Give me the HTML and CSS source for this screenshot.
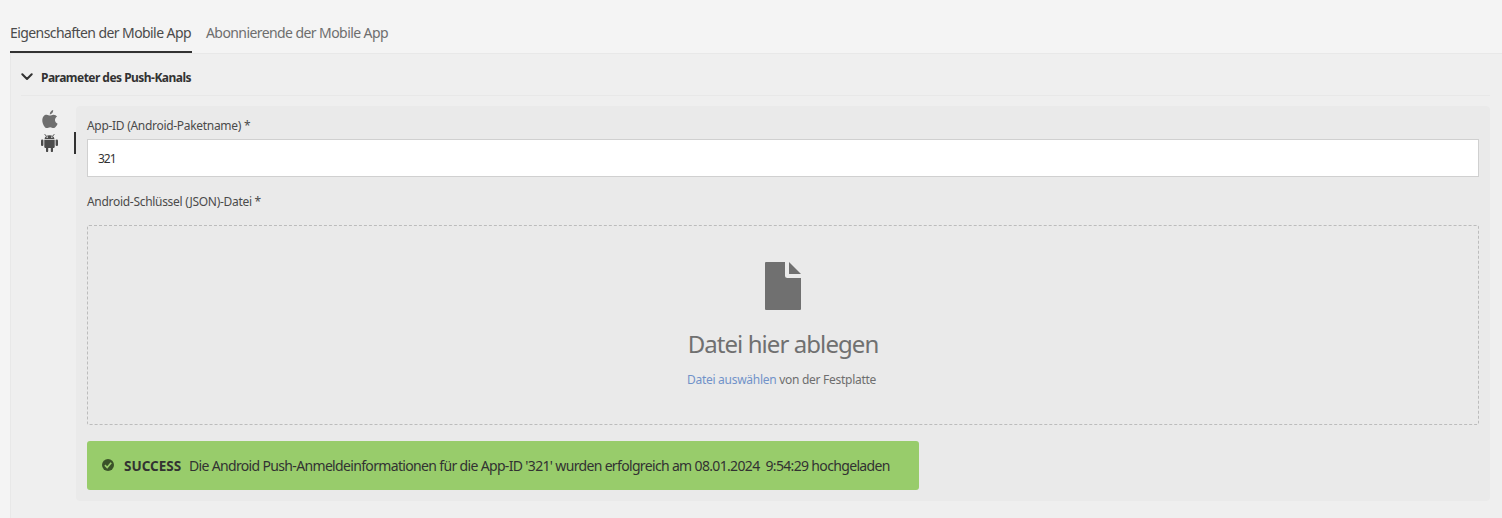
FILE: index.html
```html
<!DOCTYPE html>
<html lang="de">
<head>
<meta charset="utf-8">
<title>Mobile App</title>
<link rel="stylesheet" href="styles.css">
</head>
<body>
<nav class="tabs">
  <a class="tab tab-active"><span>Eigenschaften der Mobile App</span></a>
  <a class="tab"><span>Abonnierende der Mobile App</span></a>
</nav>
<main class="panel">
  <header class="section-head">
    <svg class="chevron" viewBox="0 0 12 8"><path d="M1.3 1.2 6 6 10.7 1.2" fill="none" stroke="#323232" stroke-width="2" stroke-linecap="round" stroke-linejoin="round"/></svg>
    <h1><span>Parameter des Push-Kanals</span></h1>
  </header>
  <div class="channel">
    <div class="platforms">
      <div class="platform">
        <svg class="icon apple" viewBox="0 0 16 18"><path d="M11.2 0C11.4 2.5 9.7 4.3 7.8 4.5 7.6 2.4 9.2.5 11.2 0Z"/><path d="M8 5.6C9 5.6 9.9 4.7 11.5 4.7c1.5 0 2.8.8 3.6 1.9-3 1.8-2.7 5.8.5 7.1C14.9 15.6 13.3 18 11.6 18c-1.300 0-1.900-.8-3.400-.8S6 18 4.800 18C2.700 18 .3 13.700.3 10.400.3 6.700 2.400 4.700 4.600 4.700 6 4.700 7 5.600 8 5.600Z"/></svg>
      </div>
      <div class="platform platform-active">
        <svg class="icon android" viewBox="0 0 17 18"><path d="M3.700.2 5.400 2.200M13.300.2 11.600 2.200" fill="none" stroke="#4b4b4b" stroke-width="1"/><path fill-rule="evenodd" d="M3.600 5C3.600 2.700 5.800 1.300 8.500 1.300S13.400 2.700 13.400 5ZM5.500 2.600v1.200h1.400v-1.200ZM10.100 2.600v1.200h1.400v-1.200Z"/><path d="M3.300 5.800h10.400v7.300a.8.8 0 0 1-.8.800H12V17.100a.9.900 0 0 1-2.200 0V13.900H7.200V17.100a.9.900 0 0 1-2.200 0V13.900H4.100a.8.800 0 0 1-.8-.800Z"/><rect x="0" y="5.400" width="2.400" height="6.600" rx="1.100"/><rect x="14.600" y="5.400" width="2.400" height="6.600" rx="1.100"/></svg>
      </div>
    </div>
    <section class="form">
      <label class="label" for="app-id"><span>App-ID (Android-Paketname) *</span></label>
      <input class="field" id="app-id" value="321">
      <div class="label label-file"><span>Android-Schlüssel (JSON)-Datei *</span></div>
      <div class="drop">
        <svg class="file" viewBox="0 0 36 48"><path d="M1 0H20V13.500Q20 16 22.500 16H36V47Q36 48 35 48H1Q0 48 0 47V1Q0 0 1 0Z"/><path d="M24 0V12H36Z"/></svg>
        <div class="drop-title"><span>Datei hier ablegen</span></div>
        <div class="drop-sub"><span><a>Datei auswählen</a> von der Festplatte</span></div>
      </div>
      <div class="alert">
        <svg class="check" viewBox="0 0 12 12"><circle cx="6" cy="6" r="6" fill="#3a5229"/><path d="M2.900 6.100 5.200 8.500 9.200 3.800" fill="none" stroke="#98cc6b" stroke-width="1.700"/></svg>
        <strong>SUCCESS</strong>
        <span class="msg">Die Android Push-Anmeldeinformationen für die App-ID '321' wurden erfolgreich am 08.01.2024&nbsp; 9:54:29 hochgeladen</span>
      </div>
    </section>
  </div>
</main>
</body>
</html>
```
FILE: styles.css
```css
* { box-sizing: border-box; }
body {
  margin: 0;
  height: 518px;
  overflow: hidden;
  display: flex;
  flex-direction: column;
  background: #f4f4f4;
  color: #4b4b4b;
  font-family: "Noto Sans", "Open Sans", sans-serif;
}
span, strong { white-space: nowrap; }
.tabs { display: flex; gap: 14px; height: 53px; padding-left: 10px; flex: none; }
.tab { height: 53px; padding-top: 23px; font-size: 14px; line-height: 20px; letter-spacing: -0.58px; color: #6e6e6e; width: 182px; }
.tab-active { color: #4b4b4b; border-bottom: 2px solid #323232; }
.panel { flex: 1; margin-left: 10px; padding: 0 12px 0 10px; background: #efefef; border: solid #e8e8e8; border-width: 1px 0 0 1px; }
.section-head { display: flex; align-items: center; height: 42px; padding-top: 5px; border-bottom: 1px solid #e8e8e8; }
.chevron { width: 12px; height: 8px; }
.section-head h1 { margin: 2px 0 0 8px; font-size: 12px; line-height: 18px; font-weight: 700; letter-spacing: -0.53px; color: #323232; }
.channel { display: flex; height: 405px; padding-top: 10px; }
.platforms { width: 55px; padding-top: 2px; }
.platform { height: 24px; padding: 2px 0 0 20px; }
.platform-active { height: 22px; border-right: 2px solid #323232; }
.icon { display: block; fill: #6e6e6e; }
.apple { width: 16px; height: 18px; margin-left: 1px; }
.android { width: 17px; height: 18px; fill: #4b4b4b; }
.form { flex: 1; display: flex; flex-direction: column; padding: 0 11px; background: #eaeaea; border-radius: 4px; }
.label { display: block; height: 33px; padding-top: 11px; font-size: 12px; line-height: 18px; letter-spacing: -0.3px; }
.field { display: block; width: 100%; height: 38px; padding: 0 10px; border: 1px solid #d0d0d0; background: #fff; color: #323232; font: 12px "Noto Sans", sans-serif; letter-spacing: -1px; outline: 0; }
.label-file { height: 48px; padding-top: 16px; }
.drop { height: 200px; padding-top: 36px; display: flex; flex-direction: column; align-items: center; border: 1px dashed #bcbcbc; border-radius: 2px; }
.file { width: 36px; height: 48px; fill: #707070; }
.drop-title { margin-top: 16px; font-size: 24px; line-height: 36px; letter-spacing: -0.93px; color: #707070; }
.drop-sub { margin-top: 9px; padding-right: 3px; font-size: 12px; line-height: 18px; letter-spacing: -0.28px; color: #6e6e6e; }
.drop-sub a { color: #7192c9; }
.alert { display: flex; align-items: center; width: 832px; height: 49px; margin-top: 16px; padding: 0 15px; background: #98cc6b; border-radius: 3px; color: #323232; font-size: 14px; line-height: 20px; letter-spacing: -0.66px; }
.check { flex: none; width: 12px; height: 12px; margin-right: 10px; margin-bottom: 2px; }
.alert strong { width: 65px; font-size: 13.5px; letter-spacing: 0; flex: none; }
```
